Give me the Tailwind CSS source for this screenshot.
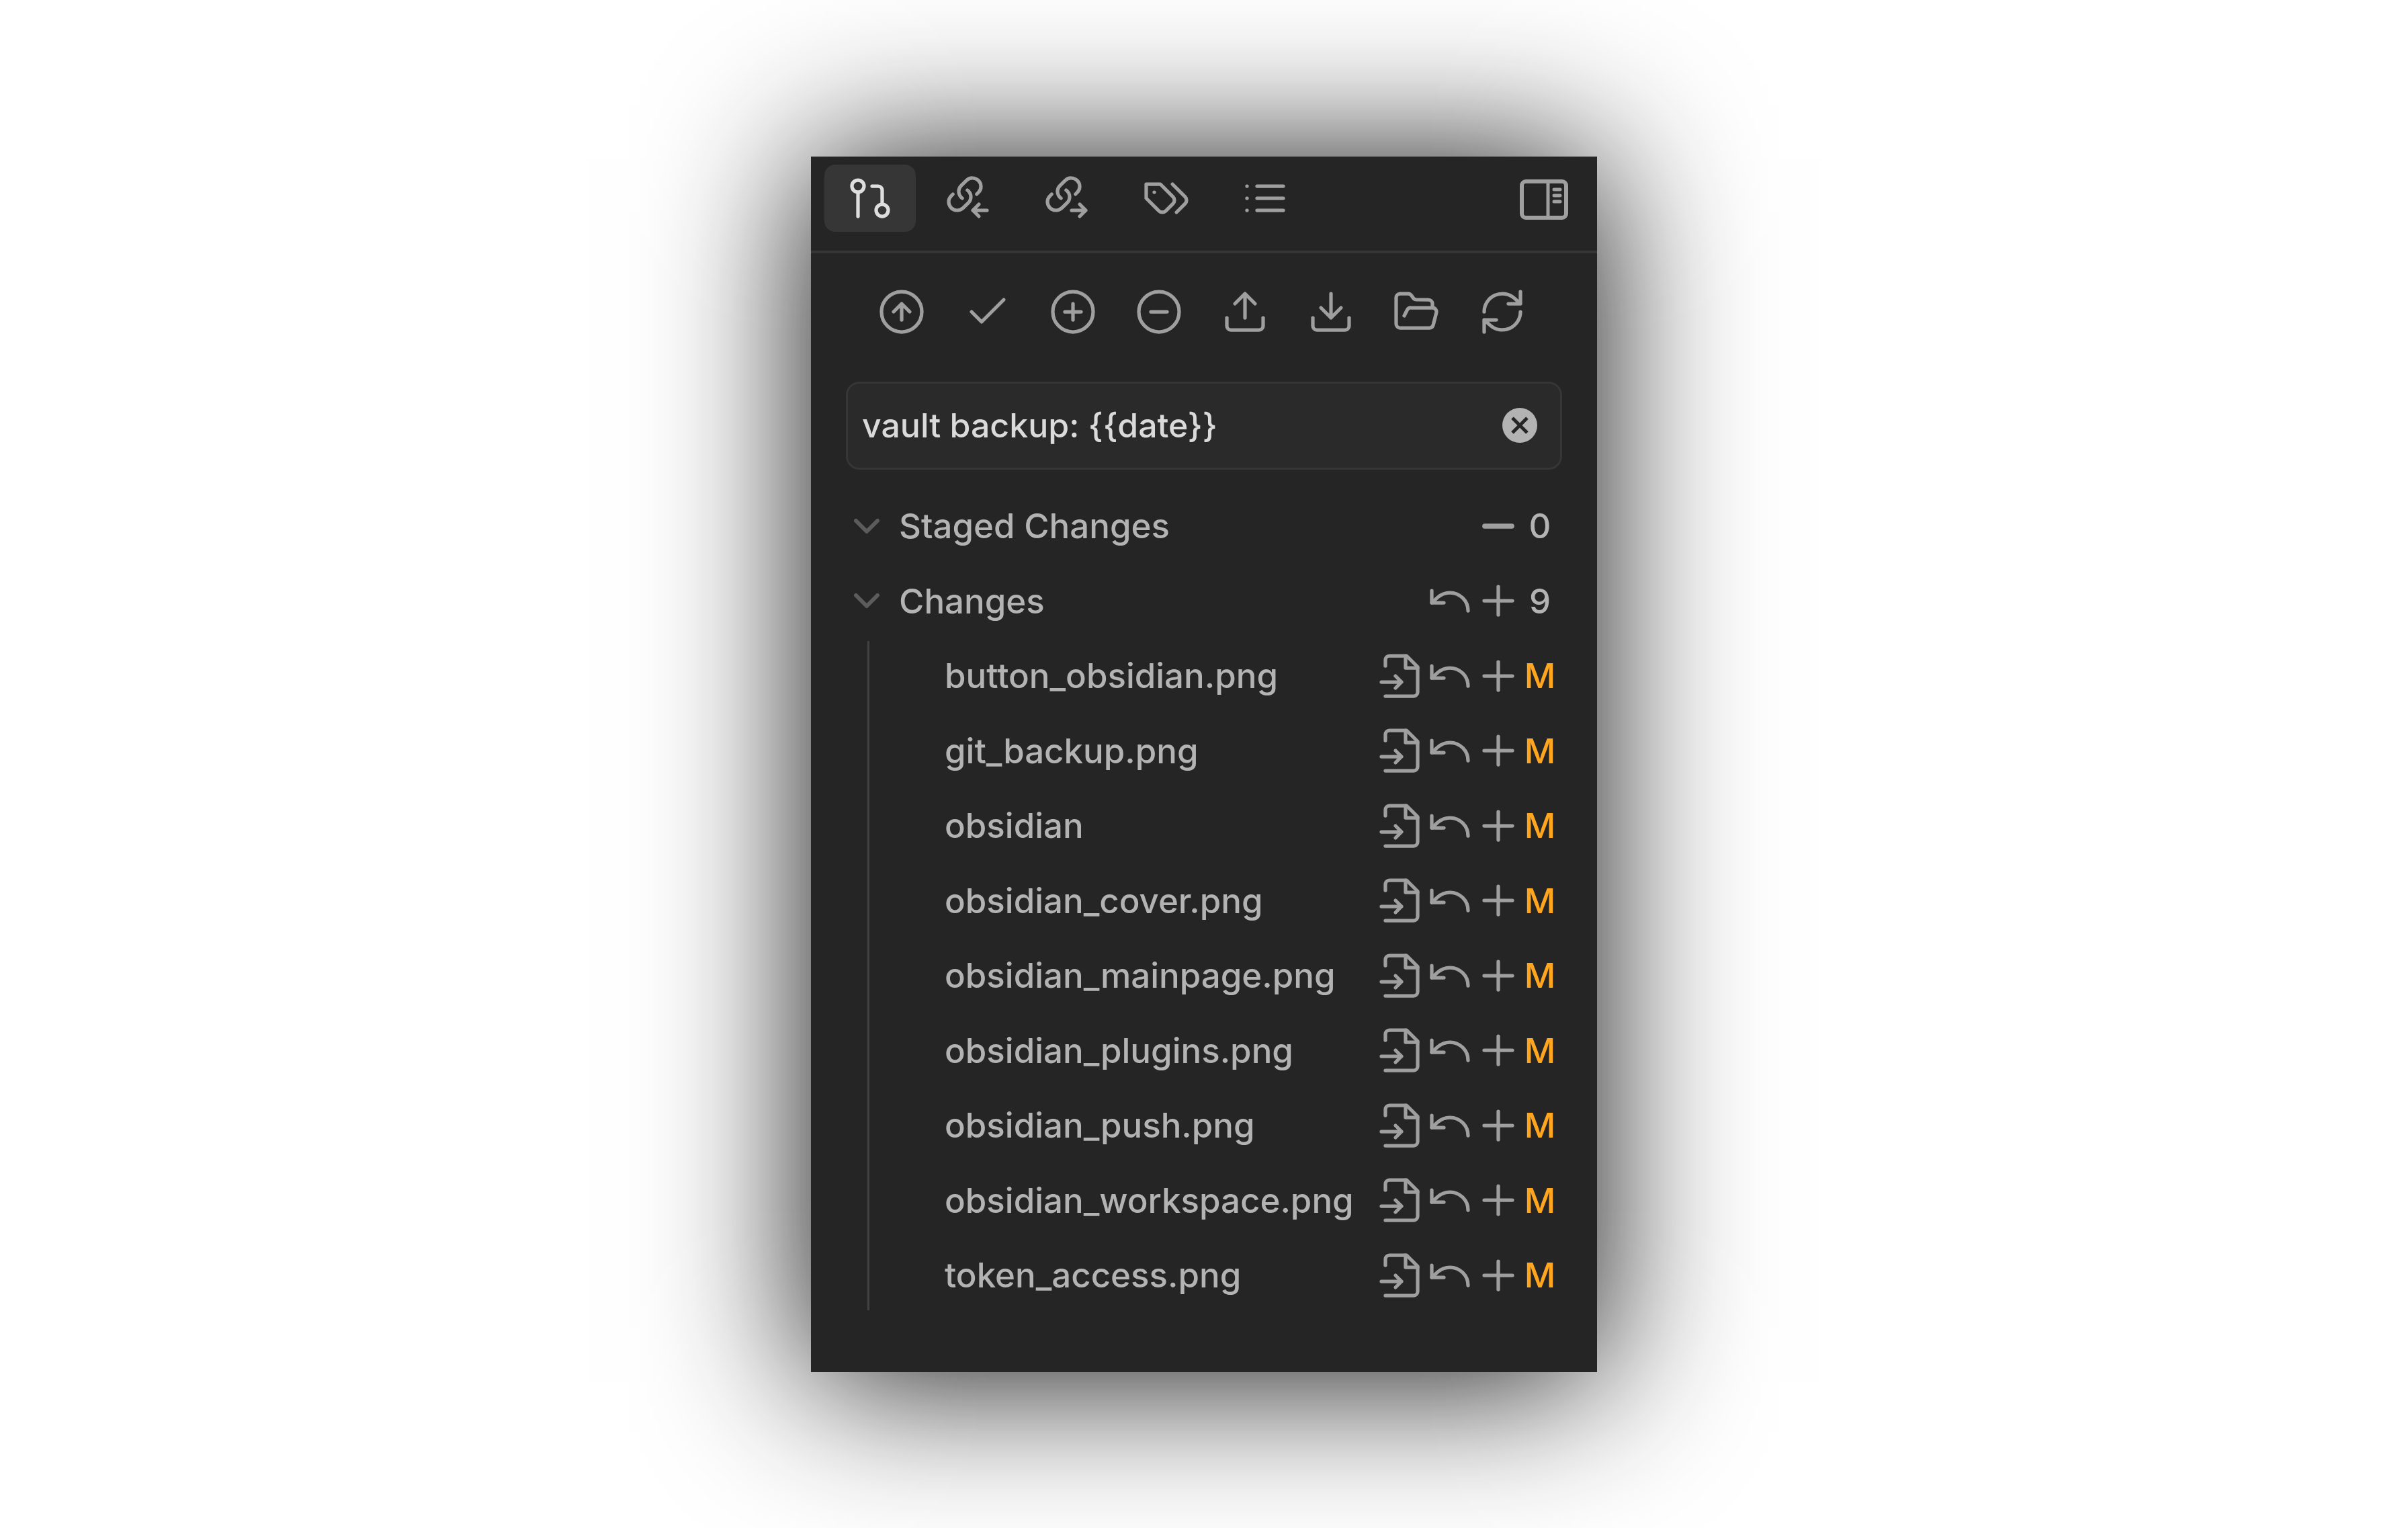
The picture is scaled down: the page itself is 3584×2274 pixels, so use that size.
<!DOCTYPE html>
<html lang="en">
<head>
<meta charset="utf-8">
<title>Source Control</title>
<script src="https://cdn.jsdelivr.net/npm/@tailwindcss/browser@4"></script>
</head>
<body class="min-h-screen bg-white flex items-center justify-center font-[Inter,sans-serif]">

<svg class="hidden" aria-hidden="true">
  <symbol id="pr" viewBox="0 0 24 24"><circle cx="18" cy="18" r="3"/><circle cx="6" cy="6" r="3"/><path d="M13 6h3a2 2 0 0 1 2 2v7M6 9v12"/></symbol>
  <symbol id="chain" viewBox="0 0 24 24"><path d="M8.705 12C8.217 11.64 7.813 11.182 7.52 10.655C7.228 10.128 7.054 9.546 7.011 8.947C6.967 8.348 7.055 7.747 7.268 7.185C7.481 6.622 7.814 6.111 8.246 5.687L10.796 3.175C11.598 2.413 12.672 1.991 13.786 2C14.901 2.01 15.967 2.45 16.755 3.226C17.543 4.002 17.99 5.052 18 6.15C18.01 7.248 17.581 8.305 16.807 9.095L15.9 10"/><path d="M11.295 8C11.783 8.36 12.187 8.818 12.48 9.345C12.772 9.872 12.946 10.454 12.989 11.053C13.033 11.652 12.945 12.253 12.732 12.815C12.519 13.378 12.186 13.889 11.754 14.313L9.204 16.825C8.402 17.587 7.328 18.009 6.214 18C5.099 17.99 4.033 17.55 3.245 16.774C2.457 15.998 2.01 14.948 2 13.85C1.99 12.752 2.419 11.695 3.193 10.905L4.1 10"/></symbol>
  <symbol id="undo" viewBox="0 0 24 24"><path d="M3 7v6h6"/><path d="M21 17a9 9 0 0 0-9-9 9 9 0 0 0-6 2.3L3 13"/></symbol>
  <symbol id="plus" viewBox="0 0 24 24"><path d="M12 5v14M5 12h14"/></symbol>
  <symbol id="goto" viewBox="0 0 24 24"><path d="M4 7V4a2 2 0 0 1 2-2h8.5L20 7.5V20a2 2 0 0 1-2 2H4"/><path d="M14 2v6h6M2 15h10M9 18l3-3-3-3"/></symbol>
  <symbol id="chevron" viewBox="0 0 38 22"><path d="M3 3 19 19 35 3"/></symbol>
</svg>

<main class="w-[1170px] bg-[#252525] pb-[88px] shadow-[0_8px_220px_4px_rgba(0,0,0,0.92)] text-[51px] leading-none font-[450] text-[#b3b3b3]">

  <nav class="flex items-start pt-3 pl-5 pr-[43px] pb-6 border-b-4 border-[#363636] text-[#9f9f9f]">
    <div class="flex gap-[11px] flex-1">
      <button aria-label="Source control" class="w-[136px] h-[100px] rounded-2xl bg-[#363636] text-[#dedede] flex items-center justify-center"><svg class="size-[72px] fill-none stroke-current stroke-[1.75]" stroke-linecap="round" stroke-linejoin="round"><use href="#pr"/></svg></button>
      <button aria-label="Backlinks" class="w-[136px] h-[100px] flex items-center justify-center"><svg viewBox="0 0 24 24" class="size-[72px] fill-none stroke-current stroke-[1.75]" stroke-linecap="round" stroke-linejoin="round"><use href="#chain"/><path d="M21 18h-7M17 15l-3 3 3 3"/></svg></button>
      <button aria-label="Outgoing links" class="w-[136px] h-[100px] flex items-center justify-center"><svg viewBox="0 0 24 24" class="size-[72px] fill-none stroke-current stroke-[1.75]" stroke-linecap="round" stroke-linejoin="round"><use href="#chain"/><path d="M14 18h7M18 15l3 3-3 3"/></svg></button>
      <button aria-label="Tags" class="w-[136px] h-[100px] flex items-center justify-center"><svg viewBox="0 0 24 24" class="size-[72px] fill-none stroke-current stroke-[1.75]" stroke-linecap="round" stroke-linejoin="round"><path d="M9 5H2v7l6.29 6.29c.94.94 2.48.94 3.42 0l3.58-3.58c.94-.94.94-2.48 0-3.42L9 5Z"/><path d="M6 9.01V9"/><path d="m15 5 6.3 6.3a2.4 2.4 0 0 1 0 3.4L17 19"/></svg></button>
      <button aria-label="Outline" class="w-[136px] h-[100px] flex items-center justify-center"><svg viewBox="0 0 24 24" class="size-[72px] fill-none stroke-current stroke-[1.75]" stroke-linecap="round" stroke-linejoin="round"><path d="M8 6h13M8 12h13M8 18h13M3 6h.01M3 12h.01M3 18h.01"/></svg></button>
    </div>
    <button aria-label="Toggle right sidebar" class="h-[104px] flex items-center"><svg viewBox="0 0 72 60" class="w-[72px] h-[60px] fill-none stroke-current stroke-[6]" stroke-linecap="round"><rect x="3" y="3" width="66" height="54" rx="6"/><path d="M42 3v54M51 15h9M51 24h9M51 33h9" class="stroke-[5]"/></svg></button>
  </nav>

  <div class="flex justify-between pt-[51px] pl-[99px] pr-[105px] text-[#9f9f9f]">
    <button aria-label="Backup"><svg viewBox="0 0 24 24" class="size-[72px] fill-none stroke-current stroke-[1.75]" stroke-linecap="round" stroke-linejoin="round"><circle cx="12" cy="12" r="10"/><path d="m16 12-4-4-4 4M12 16V8"/></svg></button>
    <button aria-label="Commit"><svg viewBox="0 0 24 24" class="size-[72px] fill-none stroke-current stroke-[1.75]" stroke-linecap="round" stroke-linejoin="round"><path d="M20 6 9 17l-5-5"/></svg></button>
    <button aria-label="Stage all"><svg viewBox="0 0 24 24" class="size-[72px] fill-none stroke-current stroke-[1.75]" stroke-linecap="round" stroke-linejoin="round"><circle cx="12" cy="12" r="10"/><path d="M12 8v8M8 12h8"/></svg></button>
    <button aria-label="Unstage all"><svg viewBox="0 0 24 24" class="size-[72px] fill-none stroke-current stroke-[1.75]" stroke-linecap="round" stroke-linejoin="round"><circle cx="12" cy="12" r="10"/><path d="M8 12h8"/></svg></button>
    <button aria-label="Push"><svg viewBox="0 0 24 24" class="size-[72px] fill-none stroke-current stroke-[1.75]" stroke-linecap="round" stroke-linejoin="round"><path d="M21 15v4a2 2 0 0 1-2 2H5a2 2 0 0 1-2-2v-4M17 8l-5-5-5 5M12 3v12"/></svg></button>
    <button aria-label="Pull"><svg viewBox="0 0 24 24" class="size-[72px] fill-none stroke-current stroke-[1.75]" stroke-linecap="round" stroke-linejoin="round"><path d="M21 15v4a2 2 0 0 1-2 2H5a2 2 0 0 1-2-2v-4M7 10l5 5 5-5M12 15V3"/></svg></button>
    <button aria-label="Change layout"><svg viewBox="0 0 24 24" class="size-[72px] fill-none stroke-current stroke-[1.75]" stroke-linecap="round" stroke-linejoin="round"><path d="m6 14 1.45-2.9A2 2 0 0 1 9.24 10H20a2 2 0 0 1 1.94 2.5l-1.55 6a2 2 0 0 1-1.94 1.5H4a2 2 0 0 1-2-2V5c0-1.1.9-2 2-2h3.93a2 2 0 0 1 1.66.9l.82 1.2a2 2 0 0 0 1.66.9H18a2 2 0 0 1 2 2v2"/></svg></button>
    <button aria-label="Refresh"><svg viewBox="0 0 24 24" class="size-[72px] fill-none stroke-current stroke-[1.75]" stroke-linecap="round" stroke-linejoin="round"><path d="M21 2v6h-6M3 12a9 9 0 0 1 15-6.7L21 8M3 22v-6h6M21 12a9 9 0 0 1-15 6.7L3 16"/></svg></button>
  </div>

  <div class="relative mx-[52px] mt-[68px]">
    <input type="text" aria-label="Commit message" value="vault backup: {{date}}" class="block w-full h-[131px] rounded-[20px] border-[3px] border-[#363636] bg-[#2a2a2a] pl-[21px] pr-24 text-[50px] text-[#dadada]">
    <button aria-label="Clear" class="absolute right-[37px] inset-y-0"><svg viewBox="0 0 52 52" class="size-[52px]"><circle cx="26" cy="26" r="26" class="fill-[#b3b3b3]"/><path d="m15 15 22 22M37 15 15 37" class="stroke-[#252525] stroke-[5]"/></svg></button>
  </div>

  <section class="mt-7">
    <header class="flex items-center h-[112px] pl-16 pr-[59px]">
      <svg class="w-[38px] h-[22px] fill-none stroke-[#5c5c5c] stroke-[6]" stroke-linecap="round" stroke-linejoin="round"><use href="#chevron"/></svg>
      <h2 class="flex-1 pl-[29px] font-[450]">Staged Changes</h2>
      <button aria-label="Unstage all" class="text-[#9f9f9f]"><svg viewBox="0 0 24 24" class="size-[72px] fill-none stroke-current stroke-[2.5]" stroke-linecap="round"><path d="M5.3 12h13.4"/></svg></button>
      <span class="w-[52px] text-center">0</span>
    </header>
  </section>

  <section>
    <header class="flex items-center h-[111px] pl-16 pr-[59px]">
      <svg class="w-[38px] h-[22px] fill-none stroke-[#5c5c5c] stroke-[6]" stroke-linecap="round" stroke-linejoin="round"><use href="#chevron"/></svg>
      <h2 class="flex-1 pl-[29px] font-[450]">Changes</h2>
      <button aria-label="Discard all" class="text-[#9f9f9f]"><svg class="size-[72px] fill-none stroke-current stroke-[1.75]" stroke-linecap="round" stroke-linejoin="round"><use href="#undo"/></svg></button>
      <button aria-label="Stage all" class="text-[#9f9f9f]"><svg class="size-[72px] fill-none stroke-current stroke-[1.75]" stroke-linecap="round" stroke-linejoin="round"><use href="#plus"/></svg></button>
      <span class="w-[52px] text-center">9</span>
    </header>
    <div class="flow-root ml-[84px] my-1 border-l-[3px] border-[#424242]">
      <ul id="files" class="-my-1"></ul>
    </div>
  </section>
</main>

<template id="row">
  <li class="flex items-center odd:h-[112px] even:h-[111px] pl-[112px] pr-[59px]">
    <span class="flex-1 whitespace-nowrap"></span>
    <button aria-label="Open file" class="text-[#9f9f9f]"><svg class="size-[72px] fill-none stroke-current stroke-[1.75]" stroke-linecap="round" stroke-linejoin="round"><use href="#goto"/></svg></button>
    <button aria-label="Discard" class="text-[#9f9f9f]"><svg class="size-[72px] fill-none stroke-current stroke-[1.75]" stroke-linecap="round" stroke-linejoin="round"><use href="#undo"/></svg></button>
    <button aria-label="Stage" class="text-[#9f9f9f]"><svg class="size-[72px] fill-none stroke-current stroke-[1.75]" stroke-linecap="round" stroke-linejoin="round"><use href="#plus"/></svg></button>
    <b class="w-[52px] text-center font-medium text-[#ffa61e]">M</b>
  </li>
</template>
<script>
  const names = ["button_obsidian.png", "git_backup.png", "obsidian", "obsidian_cover.png", "obsidian_mainpage.png", "obsidian_plugins.png", "obsidian_push.png", "obsidian_workspace.png", "token_access.png"];
  const list = document.getElementById("files");
  const row = document.getElementById("row");
  for (const name of names) {
    const item = row.content.cloneNode(true);
    item.querySelector("span").textContent = name;
    list.append(item);
  }
</script>
</body>
</html>
